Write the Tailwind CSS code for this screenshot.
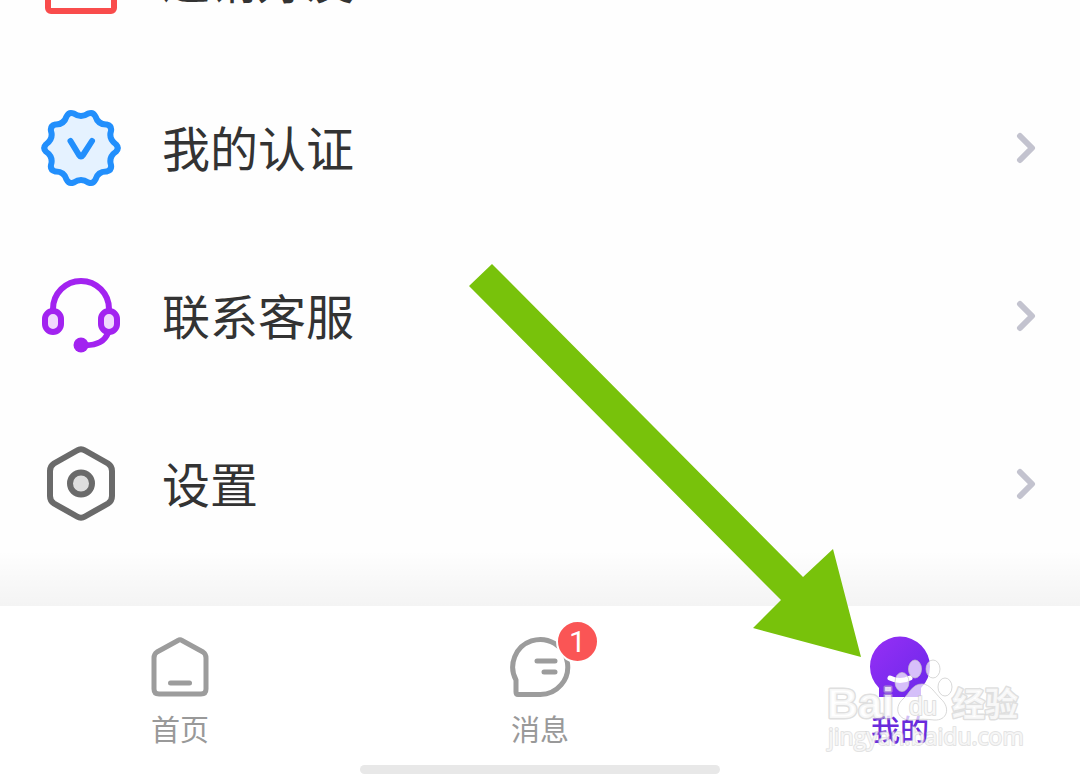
<!DOCTYPE html>
<html lang="zh-CN">
<head>
  <meta charset="UTF-8" />
  <meta name="viewport" content="width=device-width, initial-scale=1.0"/>
  <title>我的</title>
  <script src="https://cdn.jsdelivr.net/npm/@tailwindcss/browser@4"></script>
</head>
<body class="relative h-screen flex flex-col overflow-hidden bg-[#fefefe] text-[#333333] font-['Noto_Sans_CJK_SC',sans-serif]">

  <!-- Menu -->
  <main class="relative flex-1 min-h-0 flex flex-col justify-end overflow-hidden pb-[38px]">
    <a href="#" class="shrink-0 h-[168px] pl-10 pr-11 flex items-center gap-10">
      <svg class="w-[82px] h-[82px] shrink-0" viewBox="-41 -41 82 82" fill="none" stroke="#f94c4c" stroke-width="6" stroke-linejoin="round" stroke-linecap="round">
        <rect x="-33" y="-8" width="66" height="39" rx="3"/>
        <rect x="-37" y="-22" width="74" height="14" rx="3"/>
        <path d="M0 -22 L-12 -35 M0 -22 L12 -35"/>
      </svg>
      <span class="flex-1 pb-1 text-5xl">邀请好友</span>
      <svg class="w-5 h-8" viewBox="0 0 20 32" fill="none" stroke="#c3c3cf" stroke-width="6" stroke-linecap="round" stroke-linejoin="round"><path d="M4 4 L16 16 L4 28"/></svg>
    </a>
    <a href="#" class="shrink-0 h-[168px] pl-10 pr-11 flex items-center gap-10">
      <svg class="w-[82px] h-[82px] shrink-0" viewBox="-41 -41 82 82" fill="none" stroke="#228ffc" stroke-width="6" stroke-linejoin="round" stroke-linecap="round">
        <path fill="#e5f2ff" d="M35 3.6 Q27.4 8.9 30 17 Q31 22.3 25.5 23.6 Q17 23.4 14.5 31.5 Q12 36.5 7.2 34.4 Q0 29.5 -7.2 34.4 Q-12 36.5 -14.5 31.5 Q-17 23.4 -25.5 23.6 Q-31 22.3 -30 17 Q-27.4 8.9 -35 3.6 Q-38.5 0 -35 -3.6 Q-27.4 -8.9 -30 -17 Q-31 -22.3 -25.5 -23.6 Q-17 -23.4 -14.5 -31.5 Q-12 -36.5 -7.2 -34.4 Q0 -29.5 7.2 -34.4 Q12 -36.5 14.5 -31.5 Q17 -23.4 25.5 -23.6 Q31 -22.3 30 -17 Q27.4 -8.9 35 -3.6 Q38.5 0 35 3.6 Z"/>
        <path d="M-10.5 -7 L-2 7 Q0 10 2 7 L11 -7"/>
      </svg>
      <span class="flex-1 pb-1 text-5xl">我的认证</span>
      <svg class="w-5 h-8" viewBox="0 0 20 32" fill="none" stroke="#c3c3cf" stroke-width="6" stroke-linecap="round" stroke-linejoin="round"><path d="M4 4 L16 16 L4 28"/></svg>
    </a>
    <a href="#" class="shrink-0 h-[168px] pl-10 pr-11 flex items-center gap-10">
      <svg class="w-[82px] h-[82px] shrink-0" viewBox="-41 -41 82 82" fill="none" stroke="#a223f0" stroke-width="6" stroke-linecap="round">
        <path d="M-28 -5 V-7 A28 28 0 0 1 28 -7 V-5"/>
        <rect x="-36" y="-5" width="16" height="21" rx="8" fill="#f0d9fd"/>
        <rect x="20" y="-5" width="16" height="21" rx="8" fill="#f0d9fd"/>
        <path d="M0 29 C12 30 23 27 27 17"/>
        <circle cx="0" cy="29" r="7.5" fill="#a223f0" stroke="none"/>
      </svg>
      <span class="flex-1 pb-1 text-5xl">联系客服</span>
      <svg class="w-5 h-8" viewBox="0 0 20 32" fill="none" stroke="#c3c3cf" stroke-width="6" stroke-linecap="round" stroke-linejoin="round"><path d="M4 4 L16 16 L4 28"/></svg>
    </a>
    <a href="#" class="shrink-0 h-[168px] pl-10 pr-11 flex items-center gap-10">
      <svg class="w-[82px] h-[82px] shrink-0" viewBox="-41 -41 82 82" fill="none" stroke="#6a6a6a" stroke-width="6">
        <path d="M-4 -33.5 Q0 -36 4 -33.5 L27 -20.5 Q31 -18 31 -13 V12 Q31 17 27 19.5 L4 32.5 Q0 35 -4 32.5 L-27 19.5 Q-31 17 -31 12 V-13 Q-31 -18 -27 -20.5 Z"/>
        <circle cx="0" cy="-0.5" r="11" fill="#dedede"/>
      </svg>
      <span class="flex-1 pb-1 text-5xl">设置</span>
      <svg class="w-5 h-8" viewBox="0 0 20 32" fill="none" stroke="#c3c3cf" stroke-width="6" stroke-linecap="round" stroke-linejoin="round"><path d="M4 4 L16 16 L4 28"/></svg>
    </a>
    <div class="absolute inset-x-0 bottom-0 h-14 bg-linear-to-b from-black/0 to-black/4 pointer-events-none"></div>
  </main>

  <!-- Tab bar -->
  <nav class="shrink-0 bg-white text-[#999999]">
    <div class="grid grid-cols-3 pt-[30px] pb-[18px]">
      <a href="#" class="flex flex-col items-center gap-[11px]">
        <svg class="w-[62px] h-[62px]" viewBox="-31 -31 62 62" fill="none" stroke="#9c9c9c" stroke-width="5" stroke-linecap="round" stroke-linejoin="round">
          <path d="M-2 -26.5 Q0 -28 2 -26.5 L23 -15 Q26 -13 26 -9 V22 Q26 27 21 27 H-21 Q-26 27 -26 22 V-9 Q-26 -13 -23 -15 Z"/>
          <path d="M-9.5 16 H9.5"/>
        </svg>
        <span class="text-[29px] leading-[38px]">首页</span>
      </a>
      <a href="#" class="flex flex-col items-center gap-[11px]">
        <span class="relative">
          <svg class="w-[62px] h-[62px]" viewBox="-31 -31 62 62" fill="none" stroke="#9c9c9c" stroke-width="5" stroke-linecap="round" stroke-linejoin="round">
            <path d="M0 27.5 H-22 Q-24 27.5 -24 25 V13 A27.5 27.5 0 1 1 0 27.5 Z"/>
            <path d="M-3 -6 H15 M4 5 H15"/>
          </svg>
          <span class="absolute -top-4 left-[47px] size-[43px] rounded-full border-2 border-white bg-[#fa5555] text-white text-[30px] leading-[39px] text-center font-[Roboto,sans-serif]">1</span>
        </span>
        <span class="text-[29px] leading-[38px]">消息</span>
      </a>
      <a href="#" class="flex flex-col items-center gap-[11px] text-[#6a2bdc]" aria-current="page">
        <svg class="w-[62px] h-[62px]" viewBox="-31 -31 62 62">
          <defs>
            <linearGradient id="face" x1="0" y1="0" x2="1" y2="1">
              <stop offset="0" stop-color="#962ff5"/>
              <stop offset="1" stop-color="#6a28ea"/>
            </linearGradient>
          </defs>
          <path fill="url(#face)" d="M-21 30 V21 A30 30 0 1 1 21 21 V30 Z"/>
          <path d="M-10 11 Q0 16 10 11" fill="none" stroke="#fff" stroke-width="5" stroke-linecap="round"/>
        </svg>
        <span class="text-[29px] leading-[38px] font-medium">我的</span>
      </a>
    </div>
    <div class="mx-auto w-1/3 h-[9px] rounded-full bg-[#e8e8e8]"></div>
  </nav>

  <!-- Arrow pointing at the active tab -->
  <svg class="absolute right-[219px] bottom-[117px] w-[392px] h-[393px] pointer-events-none" viewBox="469 264 392 393">
    <path fill="#78c20b" d="M492 264 L803 577 L833 549 L861 657 L753 628 L781 600 L469 286 Z"/>
  </svg>

  <!-- Watermark -->
  <svg class="absolute right-[50px] bottom-5 w-[210px] h-[100px] pointer-events-none" viewBox="820 654 210 100" stroke-linejoin="round">
    <g fill="#fff" fill-opacity="0.7" stroke="#c8c8c8" stroke-opacity="0.7" stroke-width="1">
      <ellipse cx="915" cy="669" rx="6.5" ry="9"/>
      <ellipse cx="902" cy="682" rx="7" ry="9.5"/>
      <ellipse cx="933" cy="669" rx="7" ry="9"/>
      <ellipse cx="945" cy="687" rx="7" ry="9"/>
      <path d="M922 684 C930 684 934 692 941 699 C951 708 947 721 934 720 C926 719 920 719 912 720 C898 721 893 708 903 699 C910 693 912 684 922 684 Z"/>
    </g>
    <g fill="#fff" fill-opacity="0.75" stroke="#c4c4c4" stroke-width="3" stroke-opacity="0.55" paint-order="stroke">
      <text x="827" y="718" font-family="Liberation Sans, sans-serif" font-weight="700" font-size="43">Bai</text>
      <text x="909" y="715" font-family="Liberation Sans, sans-serif" font-size="25" stroke-width="2">du</text>
      <text x="952" y="716" font-family="Noto Sans CJK SC, sans-serif" font-weight="700" font-size="33">经验</text>
    </g>
    <text x="828" y="745" font-family="Open Sans, sans-serif" font-size="23" fill="#fff" fill-opacity="0.7" stroke="#c8c8c8" stroke-opacity="0.5" stroke-width="2" paint-order="stroke">jingyan.baidu.com</text>
  </svg>
</body>
</html>
